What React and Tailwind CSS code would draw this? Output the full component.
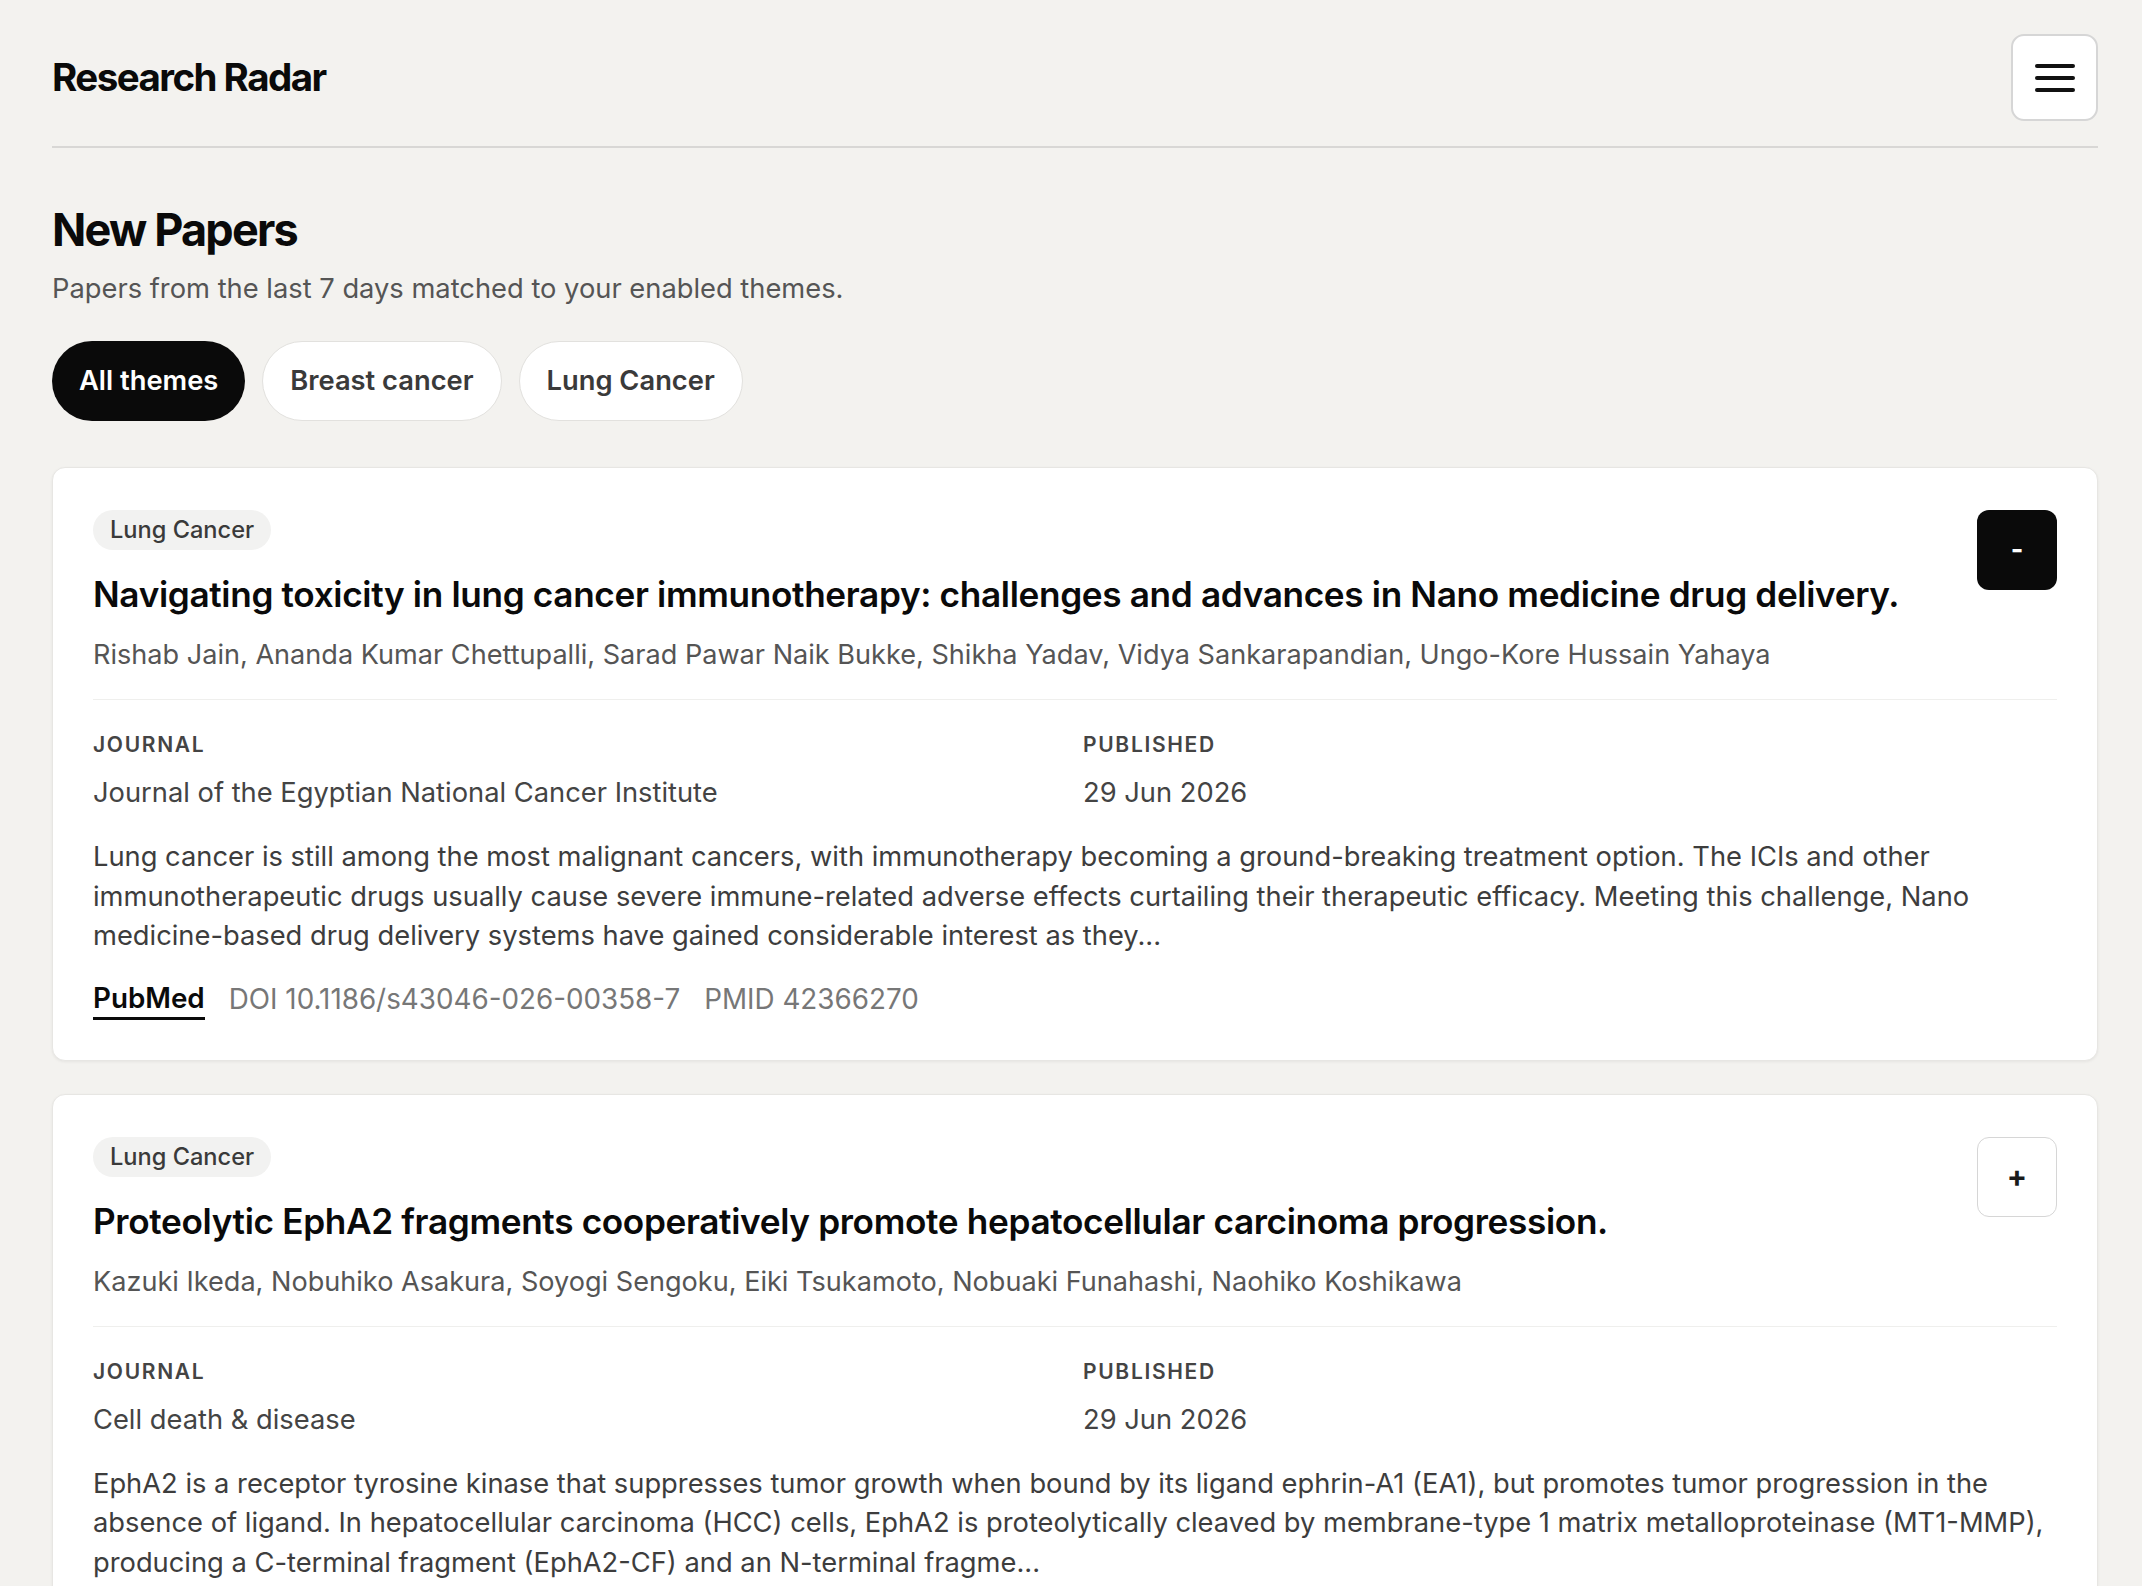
import { useState } from 'react'

const papers = [
  {
    id: 1,
    theme: 'Lung Cancer',
    title:
      'Navigating toxicity in lung cancer immunotherapy: challenges and advances in Nano medicine drug delivery.',
    authors:
      'Rishab Jain, Ananda Kumar Chettupalli, Sarad Pawar Naik Bukke, Shikha Yadav, Vidya Sankarapandian, Ungo-Kore Hussain Yahaya',
    journal: 'Journal of the Egyptian National Cancer Institute',
    published: '29 Jun 2026',
    abstract:
      'Lung cancer is still among the most malignant cancers, with immunotherapy becoming a ground-breaking treatment option. The ICIs and other immunotherapeutic drugs usually cause severe immune-related adverse effects curtailing their therapeutic efficacy. Meeting this challenge, Nano medicine-based drug delivery systems have gained considerable interest as they...',
    doi: '10.1186/s43046-026-00358-7',
    pmid: '42366270',
    saved: true,
  },
  {
    id: 2,
    theme: 'Lung Cancer',
    title: 'Proteolytic EphA2 fragments cooperatively promote hepatocellular carcinoma progression.',
    authors:
      'Kazuki Ikeda, Nobuhiko Asakura, Soyogi Sengoku, Eiki Tsukamoto, Nobuaki Funahashi, Naohiko Koshikawa',
    journal: 'Cell death & disease',
    published: '29 Jun 2026',
    abstract:
      'EphA2 is a receptor tyrosine kinase that suppresses tumor growth when bound by its ligand ephrin-A1 (EA1), but promotes tumor progression in the absence of ligand. In hepatocellular carcinoma (HCC) cells, EphA2 is proteolytically cleaved by membrane-type 1 matrix metalloproteinase (MT1-MMP), producing a C-terminal fragment (EphA2-CF) and an N-terminal fragme...',
    doi: '10.1038/s41419-026-08912-4',
    pmid: '42366105',
    saved: false,
  },
]

const themes = ['All themes', 'Breast cancer', 'Lung Cancer']

function PaperCard({ paper, onToggle }) {
  return (
    <article className="bg-white rounded-[13px] border-[1.5px] border-[#e7e6e3] shadow-[0_1px_3px_rgba(0,0,0,0.06)] px-[40px] pt-[42px] pb-[40px]">
      <div className="flex items-start justify-between gap-6">
        <div className="flex-1 min-w-0">
          <span className="inline-flex items-center h-[40px] px-[17px] rounded-full bg-[#f2f2f1] text-[23.6px] font-medium text-[#3a3a3a]">
            {paper.theme}
          </span>
          <h2 className="mt-[21px] text-[35.2px] leading-[46px] font-semibold tracking-[-0.01em] text-[#0a0a0a]">
            {paper.title}
          </h2>
          <p className="mt-[18px] text-[27.1px] leading-[40px] text-[#555555]">{paper.authors}</p>
        </div>
        <button
          onClick={onToggle}
          className={
            paper.saved
              ? 'shrink-0 w-[80px] h-[80px] rounded-[12px] bg-[#0a0a0a] text-white text-[27px] font-bold flex items-center justify-center'
              : 'shrink-0 w-[80px] h-[80px] rounded-[12px] bg-white border-[1.5px] border-[#d6d6d6] text-[#1a1a1a] text-[30px] font-bold flex items-center justify-center'
          }
        >
          {paper.saved ? '-' : '+'}
        </button>
      </div>

      <div className="mt-[24px] border-t-[1.5px] border-[#efefed] pt-[31px] grid grid-cols-2 gap-4">
        <div>
          <div className="text-[21px] leading-[28px] font-semibold tracking-[0.08em] text-[#444444]">JOURNAL</div>
          <div className="mt-[14px] text-[27.3px] leading-[40px] text-[#444444]">{paper.journal}</div>
        </div>
        <div>
          <div className="text-[21px] leading-[28px] font-semibold tracking-[0.08em] text-[#444444]">PUBLISHED</div>
          <div className="mt-[14px] text-[27.3px] leading-[40px] text-[#444444]">{paper.published}</div>
        </div>
      </div>

      <p className="mt-[24px] text-[27.3px] leading-[39.5px] text-[#3d3d3d]">{paper.abstract}</p>

      <div className="mt-[24px] flex items-center gap-[24px] text-[27.8px] leading-[37px]">
        <a href="#" className="font-semibold text-[#0a0a0a] border-b-[3px] border-[#0a0a0a]">
          PubMed
        </a>
        <span className="text-[#777777]">DOI {paper.doi}</span>
        <span className="text-[#777777]">PMID {paper.pmid}</span>
      </div>
    </article>
  )
}

export default function App() {
  const [active, setActive] = useState('All themes')
  const [items, setItems] = useState(papers)

  function toggle(id) {
    setItems((prev) => prev.map((p) => (p.id === id ? { ...p, saved: !p.saved } : p)))
  }

  return (
    <div className="min-h-screen bg-[#f3f2ef] font-['Inter',sans-serif] text-[#0a0a0a] pl-[52px] pr-[44px]">
      <header className="flex items-center justify-between pt-[34px] pb-[25px] border-b-2 border-[#d8d7d5]">
        <h1 className="text-[38.5px] leading-none font-bold tracking-[-0.04em]">Research Radar</h1>
        <button className="w-[87px] h-[87px] rounded-[13px] bg-white border-2 border-[#d6d6d6] flex flex-col items-center justify-center gap-[8px]">
          <span className="block w-[40px] h-[4px] rounded-full bg-[#111111]" />
          <span className="block w-[40px] h-[4px] rounded-full bg-[#111111]" />
          <span className="block w-[40px] h-[4px] rounded-full bg-[#111111]" />
        </button>
      </header>

      <main className="pt-[56px]">
        <h2 className="text-[45px] leading-[52px] font-bold tracking-[-0.04em]">New Papers</h2>
        <p className="mt-[13px] text-[27.3px] leading-[40px] text-[#555555]">
          Papers from the last 7 days matched to your enabled themes.
        </p>

        <div className="mt-[32px] flex gap-[17px]">
          {themes.map((t) => (
            <button
              key={t}
              onClick={() => setActive(t)}
              className={
                active === t
                  ? 'h-[80px] px-[27px] rounded-full bg-[#0a0a0a] text-white text-[27.3px] font-semibold'
                  : 'h-[80px] px-[27px] rounded-full bg-white border-[1.5px] border-[#e2e1de] text-[#3a3a3a] text-[27.3px] font-semibold'
              }
            >
              {t}
            </button>
          ))}
        </div>

        <div className="mt-[46px] flex flex-col gap-[33px] pb-10">
          {items.map((p) => (
            <PaperCard key={p.id} paper={p} onToggle={() => toggle(p.id)} />
          ))}
        </div>
      </main>
    </div>
  )
}
